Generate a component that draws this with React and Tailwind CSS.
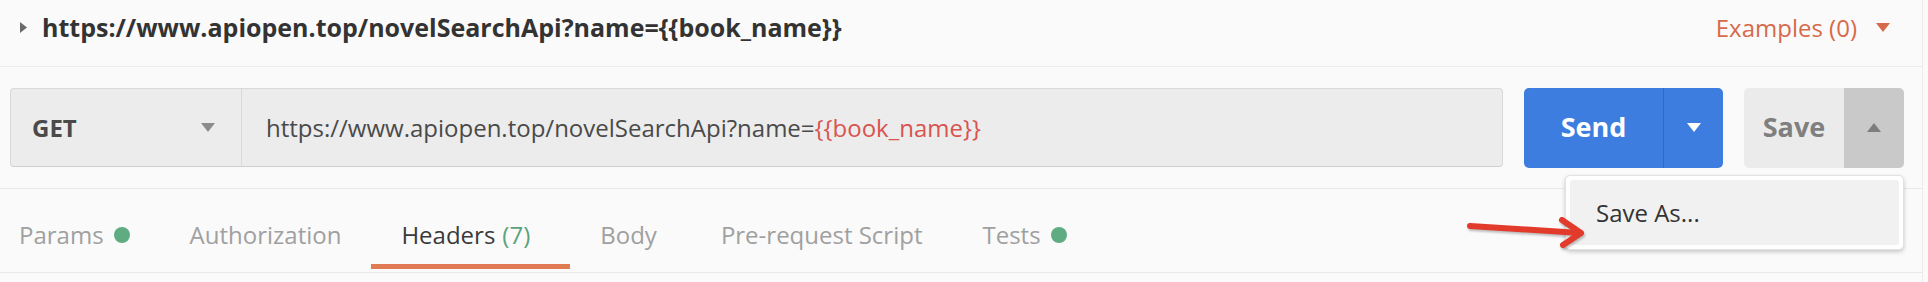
import React from 'react';

const tabs = [
    { label: 'Params', dot: true },
    { label: 'Authorization' },
    { label: 'Headers', count: '(7)', active: true },
    { label: 'Body' },
    { label: 'Pre-request Script' },
    { label: 'Tests', dot: true },
];

const Caret = ({ up = false, className = '' }) => (
    <svg width="14" height="9" viewBox="0 0 14 9" className={className}>
        <path d={up ? 'M0 9 L7 0 L14 9 Z' : 'M0 0 L14 0 L7 9 Z'} fill="currentColor" />
    </svg>
);

const tabPadding = (i, tab) => {
    if (i === 0) return 'pl-[19px] pr-[30px]';
    if (tab.active) return 'pl-[30px] pr-[40px]';
    if (tab.label === 'Body') return 'pl-[30px] pr-[34px]';
    return 'pl-[30px] pr-[30px]';
};

const App = () => {
    return (
        <div className="w-[1928px] h-[282px] bg-[#fafafa] font-['Open_Sans',sans-serif] overflow-hidden relative">
            <div className="w-[1923px] h-full border-r border-[#ececec]">
                {/* Request name */}
                <div className="h-[67px] pb-[11px] flex items-center border-b border-[#ebebeb] pl-[20px] pr-[32px]">
                    <svg width="7" height="11" viewBox="0 0 7 11" className="text-[#6a6a6a]">
                        <path d="M0 0 L7 5.5 L0 11 Z" fill="currentColor" />
                    </svg>
                    <span className="ml-[15px] text-[25px] font-bold text-[#333333] leading-none">
                        {'https://www.apiopen.top/novelSearchApi?name={{book_name}}'}
                    </span>
                    <div className="ml-auto flex items-center text-[#d66b4b]">
                        <span className="text-[24px] leading-none">Examples (0)</span>
                        <Caret className="ml-[19px]" />
                    </div>
                </div>

                {/* URL bar */}
                <div className="h-[121px] flex items-center pl-[10px]">
                    <div className="flex h-[79px] w-[1493px] bg-[#ececec] border border-[#d9d9d9] border-b-[#cfcfcf] rounded-[4px]">
                        <div className="w-[231px] flex items-center justify-between pl-[21px] pr-[26px] border-r border-[#d9d9d9]">
                            <span className="text-[24px] font-bold text-[#4a4a4a]">GET</span>
                            <Caret className="text-[#8c8c8c]" />
                        </div>
                        <div className="flex items-center pl-[24px] text-[24px] text-[#4a4a4a]">
                            https://www.apiopen.top/novelSearchApi?name=
                            <span className="text-[#d9534f]">{'{{book_name}}'}</span>
                        </div>
                    </div>

                    <div className="ml-[21px] flex h-[80px] w-[199px] rounded-[5px] bg-[#3c7ddf] text-white">
                        <div className="w-[139px] flex items-center justify-center text-[27px] font-bold">Send</div>
                        <div className="flex-1 flex items-center justify-center border-l border-[#3369c2]">
                            <Caret />
                        </div>
                    </div>

                    <div className="ml-[21px] flex h-[80px] w-[160px] rounded-[5px] overflow-hidden bg-[#ebebeb]">
                        <div className="w-[100px] flex items-center justify-center text-[27px] font-bold text-[#7f7f7f]">Save</div>
                        <div className="flex-1 flex items-center justify-center bg-[#c9c9c9] text-[#7d7d7d]">
                            <Caret up />
                        </div>
                    </div>
                </div>

                {/* Tabs */}
                <div className="h-[85px] border-t border-b border-[#e9e9e9]">
                    <div className="flex h-[80px]">
                        {tabs.map((tab, i) => (
                            <div
                                key={tab.label}
                                className={`flex items-center pt-[17px] border-b-[5px] ${tabPadding(i, tab)} ${tab.active ? 'border-[#e07b53] text-[#3a3a3a]' : 'border-transparent text-[#a0a0a0]'}`}
                            >
                                <span className="text-[24px] leading-none">{tab.label}</span>
                                {tab.count && <span className="ml-[7px] text-[24px] leading-none text-[#5aa27c]">{tab.count}</span>}
                                {tab.dot && <span className="ml-[10px] w-[16px] h-[16px] rounded-full bg-[#5fac82]"></span>}
                            </div>
                        ))}
                    </div>
                </div>
            </div>

            {/* Save menu */}
            <div className="absolute left-[1565px] top-[175px] w-[339px] h-[75px] bg-white border border-[#e2e2e2] rounded-[5px] shadow-[0_2px_4px_rgba(0,0,0,0.2)] p-[4px]">
                <div className="h-full rounded-[3px] bg-[#f1f1f1] flex items-center pl-[26px] text-[24px] text-[#333333]">
                    Save As...
                </div>
            </div>

            {/* Annotation arrow */}
            <svg className="absolute left-[1460px] top-[212px]" width="130" height="40" viewBox="0 0 130 40">
                <g fill="none" stroke="#e23b2c" strokeWidth="6" strokeLinecap="round" strokeLinejoin="round" style={{ filter: 'drop-shadow(1px 2px 1px rgba(0,0,0,0.25))' }}>
                    <path d="M10 14 L120 21" />
                    <path d="M102 8 L121 21 L103 33" />
                </g>
            </svg>
        </div>
    );
};

export default App;
